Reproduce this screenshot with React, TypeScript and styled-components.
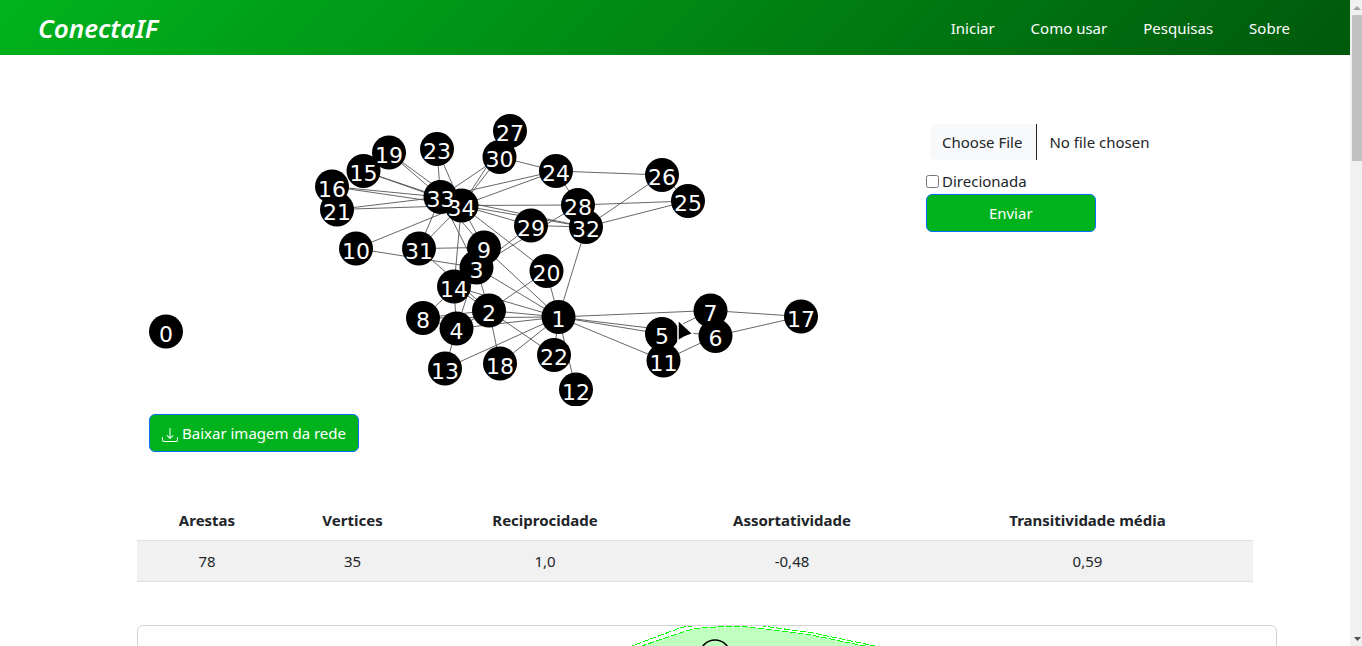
import React from "react";
import styled, { createGlobalStyle } from "styled-components";
import { BsDownload } from "react-icons/bs";

const GlobalStyle = createGlobalStyle`
  *, *::before, *::after { box-sizing: border-box; }
  body {
    margin: 0;
    background: #fff;
    color: #212529;
    font: 400 15px/24px "Noto Sans", "Open Sans", sans-serif;
  }
`;

const Shell = styled.div`
  display: flex;
  height: 100vh;
  overflow: hidden;
`;

const Page = styled.div`
  flex: 1;
  min-width: 0;
  overflow: hidden;
`;

const Header = styled.header`
  display: flex;
  align-items: center;
  justify-content: space-between;
  height: 55px;
  padding: 0 60px 0 38px;
  background: linear-gradient(135deg, #00b41c, #00590c);
`;

const Brand = styled.a`
  color: #fff;
  font: italic 600 26px/40px "Noto Sans", "Open Sans", sans-serif;
  text-decoration: none;
`;

const Nav = styled.nav`
  display: flex;
  gap: 36px;
`;

const NavLink = styled.a`
  color: #fff;
  text-decoration: none;
`;

const Main = styled.main`
  padding-left: 64px;
`;

const Container = styled.div`
  max-width: 1140px;
  margin: 0 auto;
`;

const Row = styled.div`
  display: flex;
  align-items: flex-start;
  padding: 59px 12px 0;
`;

const GraphColumn = styled.section`
  flex: 777 1 0;
  min-width: 0;
`;

const FormColumn = styled.form`
  flex: 339 1 0;
  display: flex;
  flex-direction: column;
  align-items: flex-start;
  padding-top: 9px;
`;

const Graph = styled.svg`
  display: block;
  width: 100%;
  max-width: 669px;
  margin-bottom: 8px;
  font-family: "DejaVu Sans", sans-serif;
  font-size: 22px;
`;

const Button = styled.button<{ $wide?: boolean }>`
  display: flex;
  align-items: center;
  justify-content: center;
  gap: 4px;
  width: ${(p) => (p.$wide ? "50%" : "auto")};
  padding: 6px 12px;
  border: 1px solid #0d6efd;
  border-radius: 6px;
  background: #00b31c;
  color: #fff;
  font: inherit;
  cursor: pointer;

  svg {
    margin-top: 3px;
  }
`;

const FileInput = styled.input`
  width: 100%;
  margin: 0 0 8px 3px;
  padding: 6px 12px;
  border: 1px solid transparent;
  border-radius: 6px;
  color: inherit;
  font: inherit;
  overflow: hidden;

  &::file-selector-button {
    margin: -6px 12px -6px -12px;
    padding: 6px 14px 6px 12px;
    border: 0 solid #212529;
    border-right-width: 1px;
    background: #f8f9fa;
    color: inherit;
    font: inherit;
  }
`;

const CheckLabel = styled.label`
  display: flex;
  align-items: center;
  gap: 3px;
  margin-bottom: 1px;
`;

const Checkbox = styled.input`
  width: 13px;
  height: 13px;
  margin: 0;
`;

const Table = styled.table`
  width: calc(100% - 24px);
  margin: 48px 0 43px;
  border-collapse: collapse;
  table-layout: fixed;
  text-align: center;
`;

const Cell = styled.td`
  padding: 8px;
  border-bottom: 1px solid #dee2e6;
  background: #f1f1f1;
`;

const HeadCell = styled.th<{ $width: number }>`
  width: ${(p) => p.$width}px;
  padding: 8px;
  border-bottom: 1px solid #dee2e6;
  font-weight: 700;
`;

const Card = styled.section`
  overflow: hidden;
  border: 1px solid #d2d2d2;
  border-radius: 6px;
`;

const Clusters = styled.svg`
  display: block;
  width: 100%;
`;

const ScrollTrack = styled.div`
  display: flex;
  flex-direction: column;
  justify-content: space-between;
  width: 12px;
  padding-left: 2px;
  background: #f1f1f1;
`;

const ScrollArrow = styled.svg`
  display: block;
  width: 10px;
  height: 15px;
`;

const ScrollThumb = styled.div`
  height: 146px;
  margin-bottom: auto;
  background: #c1c1c1;
`;

const nodes: [number, number][] = [
  [166, 331.5], [558.5, 317], [489, 310.5], [476.5, 267.5], [456.5, 328.5], [662, 334],
  [715.5, 336], [710.5, 310.5], [423, 318], [484, 247.5], [356, 248.5], [663.5, 360.5],
  [576, 389.5], [445, 368.5], [454, 286.5], [363.5, 171], [332, 186.5], [801, 316.5],
  [500, 363.5], [389, 152.5], [546.5, 271], [337, 209.5], [554, 355], [437, 149],
  [556, 171], [688, 201], [662, 175], [510, 131], [578, 205], [531, 225.5], [499.5, 157],
  [419, 248.5], [586, 227], [440.5, 197], [461.5, 205.5],
];

const links: Record<number, number[]> = {
  1: [2, 3, 4, 5, 6, 7, 8, 9, 11, 12, 13, 14, 18, 20, 22, 32],
  2: [3, 4, 8, 14, 18, 20, 22, 31],
  3: [4, 8, 9, 10, 14, 28, 29, 33],
  4: [8, 13, 14],
  5: [7, 11],
  6: [7, 11, 17],
  7: [17],
  9: [31, 33, 34],
  10: [34],
  14: [34],
  15: [33, 34],
  16: [33, 34],
  19: [33, 34],
  20: [34],
  21: [33, 34],
  23: [33, 34],
  24: [26, 28, 30, 33, 34],
  25: [26, 28, 32],
  26: [32],
  27: [30, 34],
  28: [34],
  29: [32, 34],
  30: [33, 34],
  31: [33, 34],
  32: [33, 34],
  33: [34],
};

const metrics = [
  { name: "Arestas", value: "78", width: 140 },
  { name: "Vertices", value: "35", width: 151 },
  { name: "Reciprocidade", value: "1,0", width: 234 },
  { name: "Assortatividade", value: "-0,48", width: 260 },
  { name: "Transitividade média", value: "0,59", width: 331 },
];

function NetworkGraph() {
  return (
    <Graph viewBox="149 114 669 292" role="img" aria-label="Rede">
      <g stroke="#555" strokeWidth="0.9">
        {Object.entries(links).flatMap(([from, targets]) =>
          targets.map((to) => {
            const [x1, y1] = nodes[Number(from)];
            const [x2, y2] = nodes[to];
            return <line key={`${from}-${to}`} x1={x1} y1={y1} x2={x2} y2={y2} />;
          })
        )}
      </g>
      {nodes.map(([x, y], i) => (
        <circle key={i} cx={x} cy={y} r="17" />
      ))}
      <g fill="#fff" textAnchor="middle">
        {nodes.map(([x, y], i) => (
          <text key={i} x={x} y={y + 10}>
            {i}
          </text>
        ))}
      </g>
      <path
        d="M678 320V341.500C681.500 338 687 335.500 693 334Z"
        fill="#000"
        stroke="#fff"
        strokeWidth="1.500"
      />
    </Graph>
  );
}

export default function App() {
  return (
    <>
      <GlobalStyle />
      <Shell>
        <Page>
          <Header>
            <Brand href="#">ConectaIF</Brand>
            <Nav>
              <NavLink href="#iniciar">Iniciar</NavLink>
              <NavLink href="#como-usar">Como usar</NavLink>
              <NavLink href="#pesquisas">Pesquisas</NavLink>
              <NavLink href="#sobre">Sobre</NavLink>
            </Nav>
          </Header>
          <Main>
            <Container>
              <Row>
                <GraphColumn>
                  <NetworkGraph />
                  <Button type="button">
                    <BsDownload size={16} />
                    Baixar imagem da rede
                  </Button>
                </GraphColumn>
                <FormColumn onSubmit={(e) => e.preventDefault()}>
                  <FileInput type="file" aria-label="Arquivo da rede" />
                  <CheckLabel>
                    <Checkbox type="checkbox" />
                    Direcionada
                  </CheckLabel>
                  <Button type="submit" $wide>
                    Enviar
                  </Button>
                </FormColumn>
              </Row>
              <Table>
                <thead>
                  <tr>
                    {metrics.map((m) => (
                      <HeadCell key={m.name} scope="col" $width={m.width}>
                        {m.name}
                      </HeadCell>
                    ))}
                  </tr>
                </thead>
                <tbody>
                  <tr>
                    {metrics.map((m) => (
                      <Cell key={m.name}>{m.value}</Cell>
                    ))}
                  </tr>
                </tbody>
              </Table>
              <Card>
                <Clusters viewBox="0 0 1138 400" role="img" aria-label="Comunidades">
                  <path
                    d="M480 28L545 6Q560 1 577 1Q593 0 609 1L668 8L727 20L780 32V400H480Z"
                    fill="#c0ffc0"
                  />
                  <g
                    fill="none"
                    stroke="#0f0"
                    strokeDasharray="6 2"
                    shapeRendering="crispEdges"
                  >
                    <path d="M475 27L542 2Q552 -1 580 -1Q610 -2 625 0L675 7L737 20L790 32" />
                    <path d="M480 28L545 6Q560 1 577 1Q593 0 609 1L668 8L727 20L780 32" />
                  </g>
                  <circle cx="577" cy="29" r="15" fill="#c0ffc0" stroke="#000" strokeWidth="1.500" />
                </Clusters>
              </Card>
            </Container>
          </Main>
        </Page>
        <ScrollTrack aria-hidden="true">
          <ScrollArrow viewBox="0 0 10 15">
            <path d="M1 10L5 6L9 10Z" fill="#a3a3a3" />
          </ScrollArrow>
          <ScrollThumb />
          <ScrollArrow viewBox="0 0 10 15">
            <path d="M2 6H9L5.500 10Z" fill="#505050" />
          </ScrollArrow>
        </ScrollTrack>
      </Shell>
    </>
  );
}
